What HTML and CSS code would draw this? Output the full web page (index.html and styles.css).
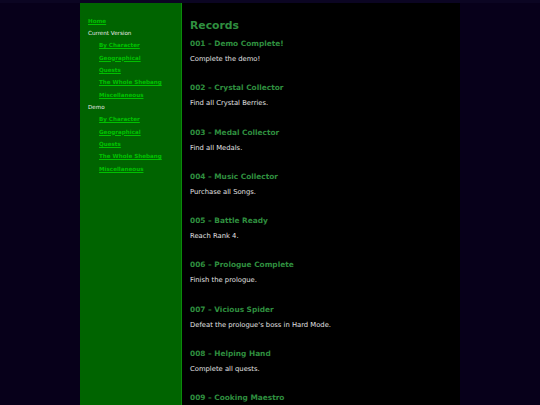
FILE: index.html
```html
<!DOCTYPE html>
<html>
<head>
<meta charset="utf-8">
<link rel="stylesheet" href="styles.css">
</head>
<body>
<div class="page">
  <nav class="sidebar">
    <ul class="menu">
      <li><a href="#">Home</a></li>
      <li class="label">Current Version</li>
      <li class="sub"><a href="#">By Character</a></li>
      <li class="sub"><a href="#">Geographical</a></li>
      <li class="sub"><a href="#">Quests</a></li>
      <li class="sub"><a href="#">The Whole Shebang</a></li>
      <li class="sub"><a href="#">Miscellaneous</a></li>
      <li class="label">Demo</li>
      <li class="sub"><a href="#">By Character</a></li>
      <li class="sub"><a href="#">Geographical</a></li>
      <li class="sub"><a href="#">Quests</a></li>
      <li class="sub"><a href="#">The Whole Shebang</a></li>
      <li class="sub"><a href="#">Miscellaneous</a></li>
    </ul>
  </nav>
  <main class="content">
    <h1>Records</h1>
    <section class="record"><h3>001 – Demo Complete!</h3><p>Complete the demo!</p></section>
    <section class="record"><h3>002 – Crystal Collector</h3><p>Find all Crystal Berries.</p></section>
    <section class="record"><h3>003 – Medal Collector</h3><p>Find all Medals.</p></section>
    <section class="record"><h3>004 – Music Collector</h3><p>Purchase all Songs.</p></section>
    <section class="record"><h3>005 – Battle Ready</h3><p>Reach Rank 4.</p></section>
    <section class="record"><h3>006 – Prologue Complete</h3><p>Finish the prologue.</p></section>
    <section class="record"><h3>007 – Vicious Spider</h3><p>Defeat the prologue's boss in Hard Mode.</p></section>
    <section class="record"><h3>008 – Helping Hand</h3><p>Complete all quests.</p></section>
    <section class="record"><h3>009 – Cooking Maestro</h3><p>Cook all recipes.</p></section>
  </main>
</div>
</body>
</html>
```
FILE: styles.css
```css
html, body {
  margin: 0;
  padding: 0;
  height: 100%;
  overflow: hidden;
}
body {
  background: #07001a;
  border-top: 3px solid #0b0522;
  font-family: "DejaVu Sans", Verdana, sans-serif;
  box-sizing: border-box;
}
.page {
  width: 380px;
  margin: 0 auto;
  display: flex;
  min-height: 420px;
}
.sidebar {
  width: 101px;
  background: #006400;
  border-right: 1px solid #0a8a0a;
  flex: none;
}
.menu {
  list-style: none;
  margin: 0;
  padding: 11.5px 0 0 8px;
  font-size: 5.6px;
}
.menu li {
  height: 12.35px;
  line-height: 12.35px;
  color: #e8e8e8;
}
.menu li.sub {
  padding-left: 11px;
}
.menu a {
  color: #00c000;
  font-weight: bold;
  text-decoration: underline;
}
.content {
  flex: 1;
  background: #000;
  padding: 15px 8px 0 8px;
  color: #e0e0e0;
}
.content h1 {
  margin: 0 0 5px;
  font-size: 10.8px;
  line-height: 16px;
  color: #2f8f3f;
  font-weight: bold;
}
.record {
  height: 44.3px;
}
.record h3 {
  margin: 0;
  font-size: 7.4px;
  line-height: 10px;
  color: #2f8f3f;
  font-weight: bold;
}
.record p {
  margin: 5px 0 0;
  font-size: 6.8px;
  line-height: 10px;
}
```
